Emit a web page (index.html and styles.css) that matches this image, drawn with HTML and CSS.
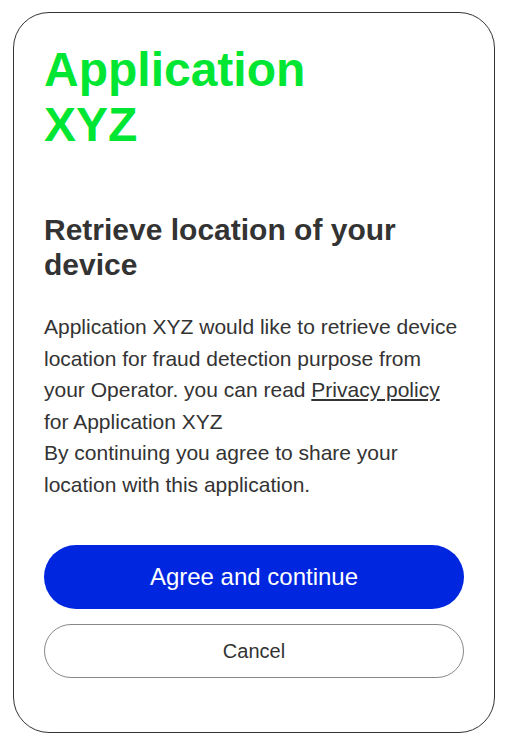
FILE: index.html
```html
<!DOCTYPE html>
<html lang="en">
<head>
    <meta charset="UTF-8">
    <meta name="viewport" content="width=device-width, initial-scale=1.0">
    <title>Application XYZ - Location consent</title>
    <link rel="stylesheet" href="styles.css">
</head>
<body>
    <div class="card">
        <h1 class="app-name">Application XYZ</h1>
        <h2 class="title">Retrieve location of your device</h2>
        <p class="description">
            Application XYZ would like to retrieve device location for fraud detection purpose from your Operator. you can read <a href="#">Privacy policy</a> for Application XYZ<br>
            By continuing you agree to share your location with this application.
        </p>
        <div class="actions">
            <button class="btn btn-primary" id="agree">Agree and continue</button>
            <button class="btn btn-secondary" id="cancel">Cancel</button>
        </div>
    </div>
</body>
</html>
```

FILE: styles.css
```css
/* Basic Reset */
* {
    margin: 0;
    padding: 0;
    box-sizing: border-box;
}

body {
    font-family: 'Liberation Sans', Arial, sans-serif;
    background: #fff;
    color: #333;
    padding: 12px 13px 0;
}

.card {
    border: 1px solid #333;
    border-radius: 36px;
    padding: 29px 30px 54px;
    background: #fff;
}

.app-name {
    max-width: 300px;
    font-size: 48px;
    line-height: 1.15;
    font-weight: bold;
    color: #00e632;
}

.title {
    margin-top: 61px;
    font-size: 30px;
    line-height: 1.15;
    font-weight: bold;
    color: #333;
}

.description {
    margin-top: 29px;
    font-size: 21px;
    line-height: 1.5;
    color: #333;
}

.description a {
    color: #333;
    text-decoration: underline;
}

.actions {
    margin-top: 45px;
    display: flex;
    flex-direction: column;
    gap: 15px;
}

.btn {
    width: 100%;
    font-family: inherit;
    border-radius: 32px;
    cursor: pointer;
}

.btn-primary {
    height: 64px;
    font-size: 24px;
    color: #fff;
    background: #0026e0;
    border: none;
}

.btn-secondary {
    height: 54px;
    font-size: 20px;
    color: #333;
    background: #fff;
    border: 1px solid #888;
}
```
